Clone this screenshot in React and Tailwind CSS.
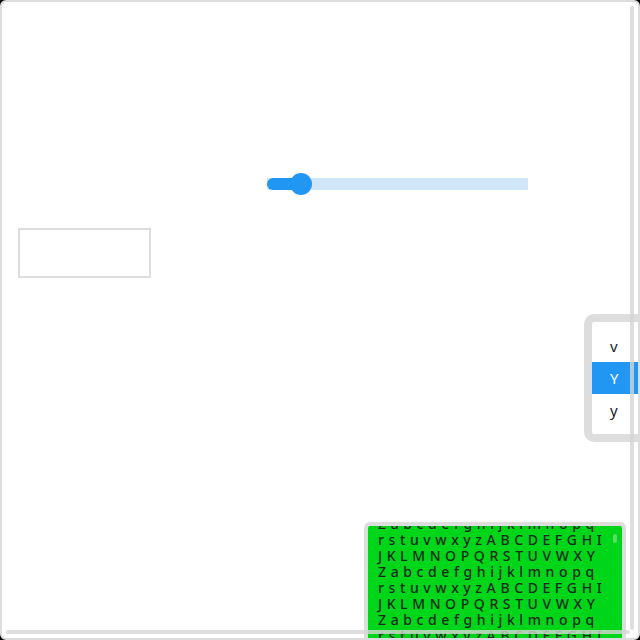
import React from 'react'

const lines = [
  'Zabcdefghijklmnopq',
  'rstuvwxyzABCDEFGHI',
  'JKLMNOPQRSTUVWXY',
  'Zabcdefghijklmnopq',
  'rstuvwxyzABCDEFGHI',
  'JKLMNOPQRSTUVWXY',
  'Zabcdefghijklmnopq',
  'rstuvwxyzABCDEFGHI',
]

const options = ['v', 'Y', 'y']

export default function App() {
  return (
    <div className="w-[640px] h-[640px] bg-black" style={{ fontFamily: '"Noto Sans", sans-serif' }}>
      <div className="relative w-full h-full bg-white border-2 border-[#dddddd] rounded-[6px] overflow-hidden">
        {/* slider */}
        <div className="mt-[171px] ml-[265px] flex items-center h-[22px] w-[261px] relative">
          <div className="w-full h-[12px] bg-[#d0e7fa] flex">
            <div className="w-[34px] h-full bg-[#2196f3] rounded-l-full" />
          </div>
          <div className="absolute left-[23px] top-0 w-[22px] h-[22px] rounded-full bg-[#2196f3]" />
        </div>

        {/* empty box */}
        <div className="mt-[33px] ml-[16px] w-[133px] h-[50px] border-2 border-[#dddddd]" />

        {/* listbox */}
        <div className="mt-[36px] ml-[582px] w-[70px] h-[128px] border-[8px] border-[#dddddd] rounded-[10px] bg-white py-[8px]">
          {options.map((o, i) => (
            <div
              key={o}
              className={`h-[32px] pl-[18px] flex items-center text-[15px] ${i === 1 ? 'bg-[#2196f3] text-white' : 'text-[#222]'}`}
            >
              {o}
            </div>
          ))}
        </div>

        {/* green scroll box */}
        <div className="mt-[80px] ml-[362px] w-[262px] h-[160px] border-[4px] border-[#dddddd] rounded-[6px] bg-[#00d619] overflow-hidden relative">
          <div className="mt-[-10px] pl-[10px] text-[14px] leading-[16px] font-medium tracking-[4.6px] text-[#1c2a1c] whitespace-nowrap">
            {lines.map((l, i) => (
              <div key={i}>{l}</div>
            ))}
          </div>
          <div className="absolute right-[5px] top-[8px] w-[4px] h-[9px] rounded-full bg-[#5fd96a]" />
        </div>

        {/* overlay scrollbars */}
        <div className="absolute left-[628px] top-[4px] w-[4px] h-[624px] rounded-full bg-[#d6d6d6]/80" />
        <div className="absolute left-[4px] top-[628px] w-[624px] h-[4px] rounded-full bg-[#d6d6d6]/80" />
      </div>
    </div>
  )
}
